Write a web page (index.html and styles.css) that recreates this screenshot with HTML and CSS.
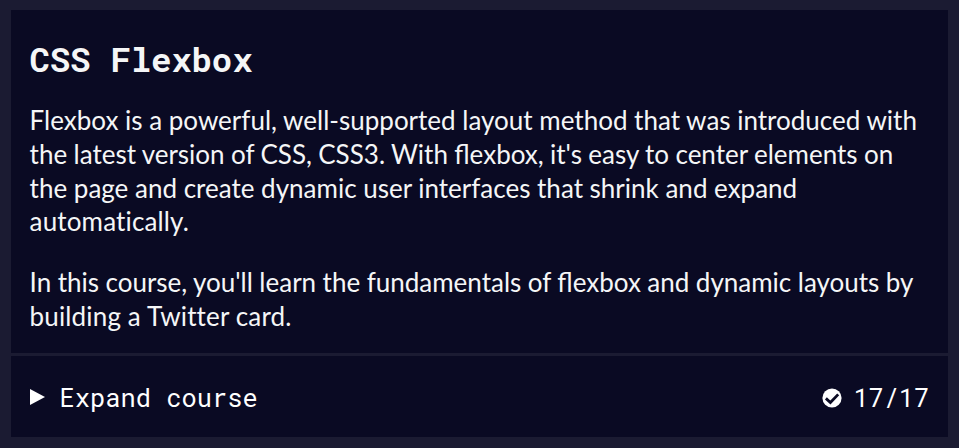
FILE: index.html
```html
<!DOCTYPE html>
<html lang="en">
<head>
<meta charset="utf-8">
<title>CSS Flexbox</title>
<link rel="stylesheet" href="styles.css">
</head>
<body>
<main class="block">
<section class="intro">
<h1 class="title">CSS Flexbox</h1>
<p class="text">Flexbox is a powerful, well-supported layout method that was introduced with<br><span class="tight">the latest version of CSS, CSS3. With flexbox, it's easy to center elements on</span><br>the page and create dynamic user interfaces that shrink and expand<br><span class="plain">automatically.</span></p>
<p class="text"><span class="snug">In this course, you'll learn the fundamentals of flexbox and dynamic layouts by</span><br><span class="plain">building a Twitter card.</span></p>
</section>
<button class="toggle">
<svg class="caret" viewBox="0 0 15 16"><path d="M0 0 15 8 0 16z" fill="currentColor"/></svg>
<span class="label">Expand course</span>
<svg class="check" viewBox="0 0 20 20"><circle cx="10" cy="10" r="9.6" fill="currentColor"/><path d="m3.9 10.4 4.5 4.1 7.8-8.1" fill="none" stroke="#0a0a23" stroke-width="2.8"/></svg>
<span class="count">17/17</span>
</button>
</main>
</body>
</html>
```
FILE: styles.css
```css
body {
  margin: 0;
  height: 448px;
  box-sizing: border-box;
  padding: 10px 11px 11px;
  background: #1b1b32;
  color: #f5f6f7;
}
.block {
  height: 427px;
  display: flex;
  flex-direction: column;
  background: #0a0a23;
}
.intro {
  box-sizing: border-box;
  height: 343px;
  padding: 28px 18.6px 0;
}
.title {
  margin: 0 0 25px;
  font: 700 34px/41px "Roboto Mono", "DejaVu Sans Mono", monospace;
  letter-spacing: -0.15px;
}
.text {
  margin: 0 0 27px;
  font: 400 26px/33.75px Lato, sans-serif;
  white-space: nowrap;
}
.tight {
  word-spacing: -0.3px;
}
.snug {
  word-spacing: -0.17px;
}
.plain {
  font-variant-ligatures: none;
  letter-spacing: 0.15px;
}
.toggle {
  flex: 1;
  display: flex;
  align-items: center;
  padding: 3px 19px 0;
  border: 0;
  border-top: 3px solid #1b1b32;
  background: none;
  color: #fff;
  font: 400 25.4px/34px "Roboto Mono", "DejaVu Sans Mono", monospace;
}
.caret {
  width: 15px;
  height: 16px;
  margin: 0 14.6px 2px 0;
}
.label {
  margin-bottom: 2px;
}
.check {
  width: 20px;
  height: 20px;
  margin: 0 11.5px 1px auto;
}
.count {
  font-size: 25.2px;
}
```
